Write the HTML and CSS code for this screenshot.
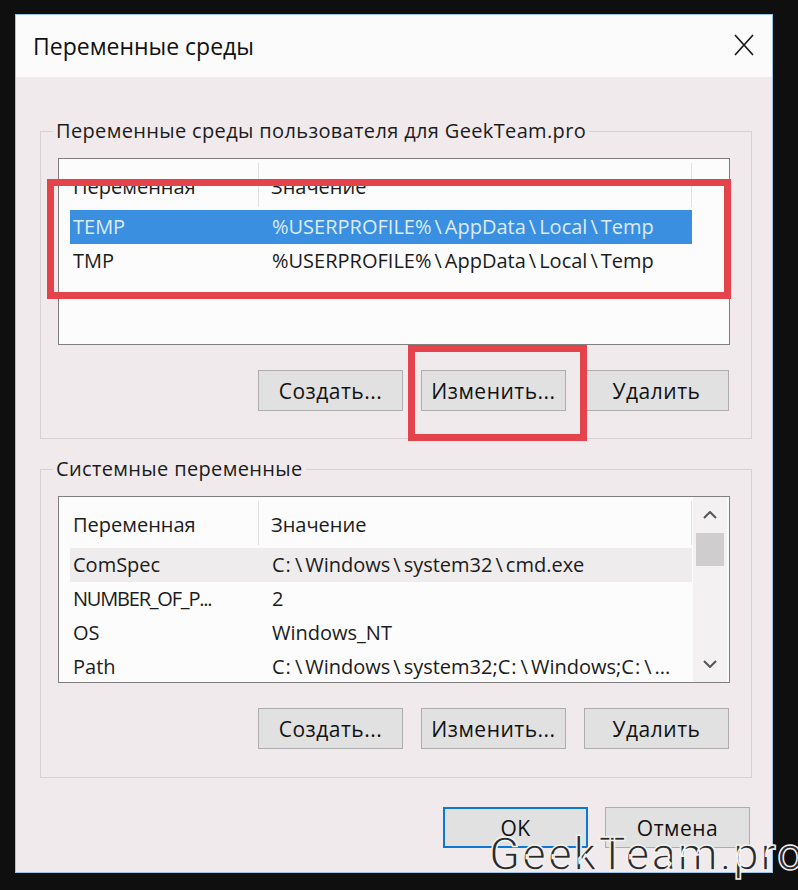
FILE: index.html
```html
<!DOCTYPE html>
<html lang="ru">
<head>
    <meta charset="UTF-8">
    <meta name="viewport" content="width=device-width, initial-scale=1.0">
    <title>Переменные среды</title>

    <link rel="stylesheet" href="styles.css">
</head>
<body>
    <div class="screen">
        <div class="dialog">
            <div class="titlebar">
                <span class="title">Переменные среды</span>
                <span class="close">
                    <svg width="20" height="22" viewBox="0 0 20 22">
                        <path d="M1 1 L19 21 M19 1 L1 21" stroke="#1a1a1a" stroke-width="1.7" fill="none"/>
                    </svg>
                </span>
            </div>

            <div class="dialog-body">
                <!-- переменные пользователя -->
                <div class="group">
                    <span class="group-label">Переменные среды пользователя для GeekTeam.pro</span>
                    <div class="listview">
                        <div class="lv-main">
                            <div class="lv-head">
                                <div class="col col-name">Переменная</div>
                                <div class="col col-value">Значение</div>
                            </div>
                            <div class="lv-row selected">
                                <div class="cell cell-name">TEMP</div>
                                <div class="cell cell-value">%USERPROFILE%<span class="bs">\</span>AppData<span class="bs">\</span>Local<span class="bs">\</span>Temp</div>
                            </div>
                            <div class="lv-row">
                                <div class="cell cell-name">TMP</div>
                                <div class="cell cell-value">%USERPROFILE%<span class="bs">\</span>AppData<span class="bs">\</span>Local<span class="bs">\</span>Temp</div>
                            </div>
                        </div>
                    </div>
                    <div class="btn-row">
                        <button class="btn">Создать...</button>
                        <button class="btn">Изменить...</button>
                        <button class="btn">Удалить</button>
                    </div>
                </div>

                <!-- системные переменные -->
                <div class="group group-system">
                    <span class="group-label">Системные переменные</span>
                    <div class="listview">
                        <div class="lv-main">
                            <div class="lv-head">
                                <div class="col col-name">Переменная</div>
                                <div class="col col-value">Значение</div>
                            </div>
                            <div class="lv-row hot">
                                <div class="cell cell-name">ComSpec</div>
                                <div class="cell cell-value">C<span class="cl">:</span><span class="bs">\</span>Windows<span class="bs">\</span>system32<span class="bs">\</span>cmd.exe</div>
                            </div>
                            <div class="lv-row">
                                <div class="cell cell-name narrow">NUMBER_OF_P...</div>
                                <div class="cell cell-value">2</div>
                            </div>
                            <div class="lv-row">
                                <div class="cell cell-name">OS</div>
                                <div class="cell cell-value">Windows_NT</div>
                            </div>
                            <div class="lv-row">
                                <div class="cell cell-name">Path</div>
                                <div class="cell cell-value">C<span class="cl">:</span><span class="bs">\</span>Windows<span class="bs">\</span>system32;C<span class="cl">:</span><span class="bs">\</span>Windows;C<span class="cl">:</span><span class="bs">\</span>...</div>
                            </div>
                        </div>
                        <div class="scrollbar">
                            <div class="sb-arrow">
                                <svg width="14" height="8" viewBox="0 0 14 8"><polyline points="1,7 7,1 13,7" stroke="#555" stroke-width="2" fill="none"/></svg>
                            </div>
                            <div class="sb-thumb"></div>
                            <div class="sb-track"></div>
                            <div class="sb-arrow">
                                <svg width="14" height="8" viewBox="0 0 14 8"><polyline points="1,1 7,7 13,1" stroke="#555" stroke-width="2" fill="none"/></svg>
                            </div>
                        </div>
                    </div>
                    <div class="btn-row">
                        <button class="btn">Создать...</button>
                        <button class="btn">Изменить...</button>
                        <button class="btn">Удалить</button>
                    </div>
                </div>

                <div class="footer">
                    <button class="btn btn-default">OK</button>
                    <button class="btn">Отмена</button>
                </div>
            </div>

            <!-- красные рамки-пометки -->
            <div class="mark mark-list"></div>
            <div class="mark mark-btn"></div>
        </div>

        <div class="watermark">GeekTeam.pro</div>
    </div>
</body>
</html>
```

FILE: styles.css
```css
*{margin: 0; padding: 0; box-sizing: border-box;}

body{
    background-color: #0f0f0f;
    font-family: "Open Sans", "Noto Sans", sans-serif;
    font-size: 20px;
    color: #1b1b1b;
    overflow: hidden;
}

.screen{
    width: 798px;
    height: 890px;
    position: relative;
    padding: 14px 0 0 15px;
}

.dialog{
    width: 758px;
    height: 859px;
    background-color: #f0eaed;
    border: 1px solid #9fc3e4;
    position: relative;
}

.titlebar{
    height: 62px;
    background-color: #fbfbfb;
    display: flex;
    align-items: center;
    justify-content: space-between;
    padding: 0 18px 0 17px;
}

.title{
    font-size: 23px;
    color: #111;
}

.close{
    display: flex;
    margin-top: -2px;
}

.dialog-body{
    padding: 54px 20px 0 24px;
}

.group{
    width: 712px;
    height: 308px;
    border: 1px solid #d6d1d4;
    position: relative;
    padding: 26px 21px 0 17px;
}

.group-system{
    height: 309px;
    margin-top: 30px;
}

.group-label{
    position: absolute;
    top: -15px;
    left: 12px;
    line-height: 28px;
    padding: 0 3px;
    letter-spacing: 0.35px;
    background-color: #f0eaed;
}

.listview{
    width: 672px;
    height: 187px;
    border: 1px solid #7f7f7f;
    background-color: #fcfcfc;
    display: flex;
    overflow: hidden;
    padding-right: 2px;
}

.lv-main{
    flex: 1;
    padding-left: 11px;
}

.lv-head{
    display: flex;
    height: 51px;
    padding-top: 4px;
}

.col{
    height: 44px;
    padding-top: 10px;
    line-height: 28px;
    border-right: 1px solid #e3e0e2;
}

.col-name{ width: 189px; padding-left: 3px; }
.col-value{ width: 433px; padding-left: 12px; }

.lv-row{
    display: flex;
    width: 622px;
    height: 34px;
    line-height: 34px;
}

.cell{ white-space: nowrap; overflow: hidden; }
.cell-name{ width: 190px; padding-left: 3px; }
.cell-value{ width: 432px; padding-left: 12px; }
.cell.narrow{ letter-spacing: -1.2px; }

/* обратный слэш и двоеточие в Segoe шире */
.bs{ margin: 0 3px; }
.cl{ margin: 0 1px; }

.lv-row.selected{
    background-color: #3b8fe0;
    color: #dcebfa;
}

.lv-row.hot{
    background-color: #efecee;
}

.scrollbar{
    width: 34px;
    display: flex;
    flex-direction: column;
    background-color: #f3f1f2;
}

.sb-arrow{
    height: 36px;
    display: flex;
    align-items: center;
    justify-content: center;
}

.sb-thumb{
    height: 33px;
    margin: 0 3px;
    background-color: #cfcdce;
}

.sb-track{ flex: 1; }

.btn-row{
    display: flex;
    justify-content: flex-end;
    gap: 18px;
    margin-top: 25px;
    padding-right: 1px;
}

.btn{
    width: 145px;
    height: 41px;
    font-family: inherit;
    font-size: 21px;
    letter-spacing: 0.5px;
    color: #111;
    background-color: #e1e1e1;
    border: 1px solid #adadad;
}

.btn-default{
    border: 2px solid #0a78d4;
}

.footer{
    display: flex;
    justify-content: flex-end;
    gap: 17px;
    margin-top: 29px;
    padding-right: 2px;
}

.mark{
    position: absolute;
    border: 7px solid #e4434c;
}

.mark-list{
    left: 31px;
    top: 164px;
    width: 684px;
    height: 120px;
}

.mark-btn{
    left: 392px;
    top: 330px;
    width: 179px;
    height: 96px;
}

.watermark{
    position: absolute;
    left: 489px;
    top: 831px;
    font-family: Roboto, sans-serif;
    font-size: 46px;
    line-height: 46px;
    letter-spacing: 1.5px;
    white-space: nowrap;
    color: #2a2a2a;
    -webkit-text-stroke: 1.5px #f2f2f2;
}
```
